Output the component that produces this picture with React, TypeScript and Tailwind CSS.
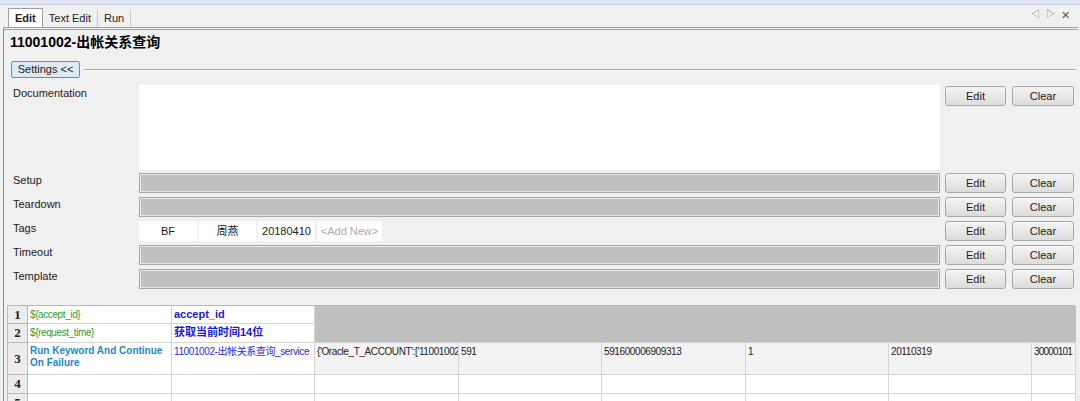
import React from "react";

const F = { fontFamily: '"Liberation Sans", "Noto Sans CJK SC", sans-serif' };

function Btn({ children }: { children: React.ReactNode }) {
  return (
    <div className="h-[20px] flex items-center justify-center rounded-[3px] border border-[#a8a8a8] bg-gradient-to-b from-[#f4f4f4] to-[#dcdcdc] text-[11px] text-[#222]">
      {children}
    </div>
  );
}

function Buttons() {
  return (
    <div className="grid grid-cols-[61px_62px] gap-[6px] ml-[5px]">
      <Btn>Edit</Btn>
      <Btn>Clear</Btn>
    </div>
  );
}

function Row({ label, children, h = 20 }: { label: string; children: React.ReactNode; h?: number }) {
  return (
    <div className="flex items-start">
      <div className="w-[129px] pl-[3px] text-[11px] text-[#222] leading-[14px]">{label}</div>
      <div className="w-[801px]" style={{ height: h }}>{children}</div>
      <Buttons />
    </div>
  );
}

function GrayField() {
  return <div className="h-full border border-[#a8a8a8] bg-[#c0c0c0] shadow-[inset_0_0_0_1px_#e8e8e8]" />;
}

export default function App() {
  const cols = "grid-cols-[20px_144px_143px_144px_143px_144px_143px_143px_44px]";
  const cell = "border-r border-b border-[#d4d4d4] text-[10px] px-[2px] leading-[12px] overflow-hidden";
  const nw = "whitespace-nowrap tracking-[-0.4px]";
  const rh = "border-r border-b border-[#b8b8b8] bg-[#ececec] flex items-center justify-center font-bold text-[13px]";
  const serif = { fontFamily: '"Liberation Serif", serif' };
  return (
    <div className="w-[1080px] h-[401px] overflow-hidden bg-[#f0f0f0] text-[#222]" style={F}>
      <div className="h-[5px] bg-[#e4e6f4] border-b border-[#c7cade]" />
      <div className="h-[22px] flex items-end pl-[8px] pr-[8px] relative">
        <div className="flex items-end text-[11px]">
          <div className="h-[19px] px-[6px] bg-white border border-b-0 border-[#a0a0a0] font-bold flex items-center">Edit</div>
          <div className="h-[17px] px-[6px] flex items-center border-r border-[#c8c8c8]">Text Edit</div>
          <div className="h-[17px] px-[6px] flex items-center border-r border-[#c8c8c8]">Run</div>
        </div>
        <div className="ml-auto flex items-center gap-[6px] mb-[4px] mr-[2px] text-[#777] text-[9px]">
          <span>◁</span>
          <span>▷</span>
          <span className="text-[11px] text-[#555]">✕</span>
        </div>
      </div>
      <div className="ml-[3px] mr-[2px] border-t-[3px] border-double border-[#a0a0a0] border-l border-l-[#8a8a8a] h-[380px]">
        <div className="pl-[6px] pt-[3px] text-[14px] font-bold leading-[18px] text-black">11001002-出帐关系查询</div>
        <div className="flex items-center pl-[7px] mt-[10px]">
          <div className="h-[17px] w-[69px] flex items-center justify-center whitespace-nowrap rounded-[2px] border border-[#3c9bd8] bg-[#dde9f4] text-[11px]">Settings &lt;&lt;</div>
          <div className="flex-1 ml-[4px] mr-[2px] h-[2px] border-t border-[#a8a8a8] border-b border-b-white" />
        </div>
        <div className="pl-[6px] mt-[7px]">
          <div className="flex items-start">
            <div className="w-[129px] pl-[3px] text-[11px] leading-[14px] pt-[1px]">Documentation</div>
            <div className="w-[801px] h-[85px] bg-white" />
            <div className="mt-[1px]"><Buttons /></div>
          </div>
          <div className="flex flex-col gap-[4px] mt-[3px]">
            <Row label="Setup"><GrayField /></Row>
            <Row label="Teardown"><GrayField /></Row>
            <Row label="Tags">
              <div className="flex h-full gap-[2px] text-[11px]">
                <div className="w-[58px] bg-white flex items-center justify-center">BF</div>
                <div className="w-[57px] bg-white flex items-center justify-center">周燕</div>
                <div className="w-[57px] bg-white flex items-center justify-center">20180410</div>
                <div className="w-[65px] bg-white flex items-center justify-center whitespace-nowrap text-[#aaa]">&lt;Add New&gt;</div>
              </div>
            </Row>
            <Row label="Timeout"><GrayField /></Row>
            <Row label="Template"><GrayField /></Row>
          </div>
        </div>
        <div className={`mt-[16px] ml-[3px] w-[1068px] grid ${cols} grid-rows-[18px_19px_32px_19px_19px] border-t border-l border-[#b8b8b8]`}>
          <div className={`${rh} col-start-1 row-start-1`} style={serif}>1</div>
          <div className={`${cell} ${nw} col-start-2 row-start-1 bg-white text-[#2f9a3a] pt-[3px]`}>{"${accept_id}"}</div>
          <div className={`${cell} whitespace-nowrap col-start-3 row-start-1 bg-white text-[#1818d8] font-bold text-[11px] pt-[2px]`}>accept_id</div>
          <div className="col-start-4 col-span-6 row-start-1 row-span-2 bg-[#c0c0c0] border-b border-[#d4d4d4]" />
          <div className={`${rh} col-start-1 row-start-2`} style={serif}>2</div>
          <div className={`${cell} ${nw} col-start-2 row-start-2 bg-white text-[#2f9a3a] pt-[3px]`}>{"${request_time}"}</div>
          <div className={`${cell} whitespace-nowrap col-start-3 row-start-2 bg-white text-[#1818d8] font-bold text-[11px] pt-[2px]`}>获取当前时间14位</div>
          <div className={`${rh} col-start-1 row-start-3`} style={serif}>3</div>
          <div className={`${cell} bg-white text-[#1f86c9] font-bold pt-[2px]`}>Run Keyword And Continue On Failure</div>
          <div className={`${cell} ${nw} bg-white text-[#2b2bdc] pt-[3px]`}>11001002-出帐关系查询_service</div>
          <div className={`${cell} ${nw} bg-[#f3f3f3] pt-[3px]`}>{"{'Oracle_T_ACCOUNT':['11001002,"}</div>
          <div className={`${cell} ${nw} bg-[#f3f3f3] pt-[3px]`}>591</div>
          <div className={`${cell} ${nw} bg-[#f3f3f3] pt-[3px]`}>591600006909313</div>
          <div className={`${cell} ${nw} bg-[#f3f3f3] pt-[3px]`}>1</div>
          <div className={`${cell} ${nw} bg-[#f3f3f3] pt-[3px]`}>20110319</div>
          <div className={`${cell} whitespace-nowrap tracking-[-0.8px] bg-[#f3f3f3] pt-[3px] px-[1px]`}>30000101</div>
          <div className={rh} style={serif}>4</div>
          {Array.from({ length: 8 }).map((_, i) => (
            <div key={`a${i}`} className={`${cell} bg-white`} />
          ))}
          <div className={rh} style={serif}>5</div>
          {Array.from({ length: 8 }).map((_, i) => (
            <div key={`b${i}`} className={`${cell} bg-white`} />
          ))}
        </div>
      </div>
    </div>
  );
}
